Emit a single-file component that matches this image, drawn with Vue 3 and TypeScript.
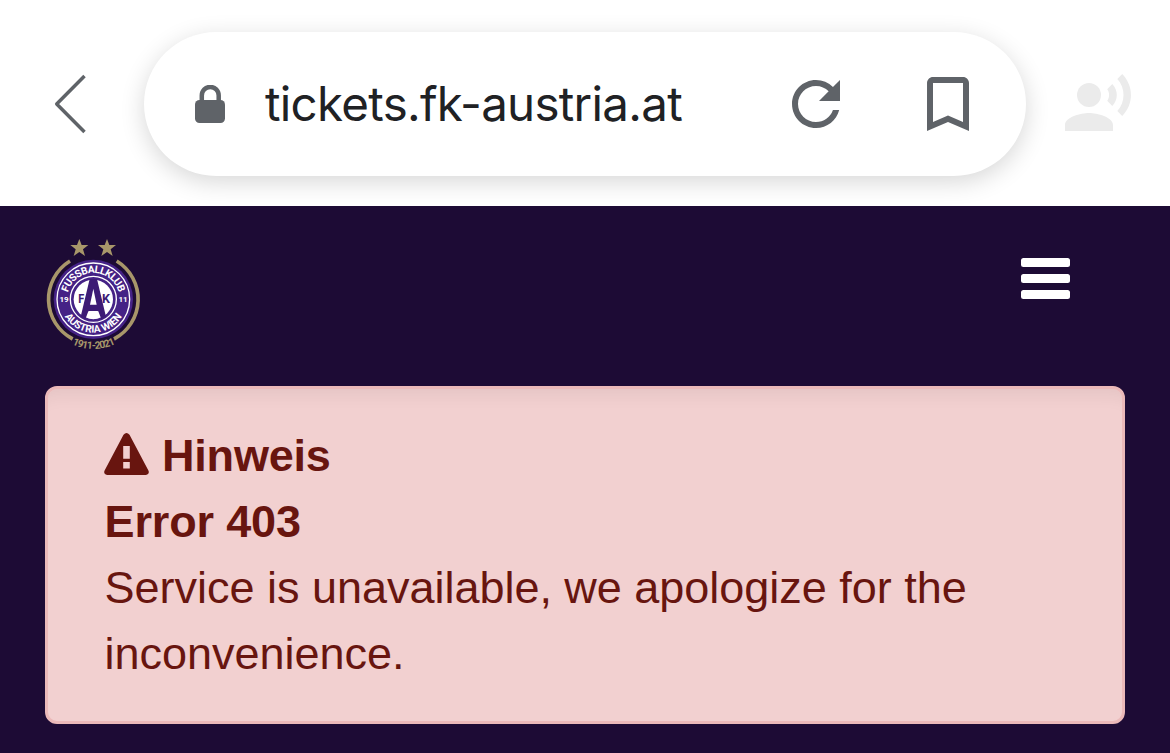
<script setup lang="ts">
const host = 'tickets.fk-austria.at'
const notice = {
  title: 'Hinweis',
  code: 'Error 403',
  message: 'Service is unavailable, we apologize for the inconvenience.',
}
</script>

<template>
  <div class="screen">
    <header class="browser">
      <svg class="back" viewBox="0 0 36 60" aria-label="Back"><path d="M32.500 2 4.700 30 32.500 58" /></svg>
      <div class="omnibox">
        <svg class="lock" viewBox="0 0 30 38">
          <path class="shackle" d="M6.800 18V10.400a8.200 8.200 0 0 1 16.900 0V18" />
          <rect y="15" width="30" height="23" rx="4.500" />
        </svg>
        <span class="host">{{ host }}</span>
        <svg class="icon reload" viewBox="0 0 24 24"><path d="M17.65 6.35A7.958 7.958 0 0 0 12 4c-4.42 0-7.99 3.58-7.99 8s3.57 8 7.99 8c3.73 0 6.84-2.55 7.73-6h-2.08A5.99 5.99 0 0 1 12 18c-3.31 0-6-2.69-6-6s2.69-6 6-6c1.66 0 3.14.69 4.22 1.78L13 11h7V4l-2.35 2.35z" /></svg>
        <svg class="icon" viewBox="0 0 24 24"><path d="M17 3H7c-1.1 0-1.99.9-1.99 2L5 21l7-3 7 3V5c0-1.1-.9-2-2-2zm0 15l-5-2.18L7 18V5h10v13z" /></svg>
      </div>
      <svg class="icon voice" viewBox="0 0 24 24"><circle cx="9" cy="9" r="4" /><path d="M9 15c-2.67 0-8 1.34-8 4v2h16v-2c0-2.66-5.33-4-8-4zm7.76-9.64l-1.68 1.69c.84 1.18.84 2.71 0 3.89l1.68 1.69c2.02-2.02 2.02-5.07 0-7.27zM20.07 2l-1.63 1.63c2.77 3.02 2.77 7.56 0 10.74L20.07 16c3.9-3.89 3.91-9.95 0-14z" /></svg>
    </header>

    <main class="page">
      <nav class="topbar">
        <svg class="crest" viewBox="0 0 390 390">
          <defs>
            <path id="arc-top" d="M111 208a79 79 0 0 1 158 0" />
            <path id="arc-bottom" d="M90 208a100 100 0 0 0 200 0" />
            <path id="arc-years" d="M41 208a149 149 0 0 0 298 0" />
          </defs>
          <g class="gold">
            <path d="M148 27l7 18h20l-16 13 6 20-17-12-17 12 6-20-16-13h20z" />
            <path d="M231 27l7 18h20l-16 13 6 20-17-12-17 12 6-20-16-13h20z" />
          </g>
          <path class="laurel" d="M120 93A134.500 134.500 0 0 0 128 327M260 93A134.500 134.500 0 0 1 252 327" />
          <circle class="disc" cx="190" cy="208" r="119" />
          <circle class="ring" cx="190" cy="208" r="109" />
          <circle class="ring" cx="190" cy="208" r="69" />
          <circle class="core" cx="190" cy="208" r="59" />
          <path class="letter" d="M179 147h22l27 113-14 8-9-24h-30l-9 24-14-8z" />
          <path class="core" d="M190 176l10 48h-20zM177 243h26l5 21q-18 7-36 0z" />
          <text class="legend" textLength="206"><textPath href="#arc-top" startOffset="50%">FUSSBALLKLUB</textPath></text>
          <text class="legend"><textPath href="#arc-bottom" startOffset="50%">AUSTRIA WIEN</textPath></text>
          <text class="year" x="102" y="217">19</text>
          <text class="year" x="279" y="217">11</text>
          <text class="initial" x="145" y="220" textLength="18" lengthAdjust="spacingAndGlyphs">F</text>
          <text class="initial" x="216" y="220" textLength="24" lengthAdjust="spacingAndGlyphs">K</text>
          <text class="span"><textPath href="#arc-years" startOffset="50%">1911-2021</textPath></text>
        </svg>
        <button class="menu" aria-label="Menu"><i /><i /><i /></button>
      </nav>

      <section class="alert" role="alert">
        <strong class="heading">
          <svg class="warning" viewBox="0 0 45 42"><path fill-rule="evenodd" d="M19.500 1.700Q22.500-1.500 25.500 1.700L44.400 37.500Q46 41 42 42H3Q-1 41 .6 37.500ZM19.200 13v12.800h6.600V13ZM19.200 29v6.500h6.600V29Z" /></svg>
          <span>{{ notice.title }}</span>
        </strong>
        <strong class="line">{{ notice.code }}</strong>
        <p class="line message">{{ notice.message }}</p>
      </section>
    </main>
  </div>
</template>

<style>
body { margin: 0; overflow: hidden; background: #1d0b35; }
</style>

<style scoped>
.screen { height: 753px; display: flex; flex-direction: column; overflow: hidden; }
.browser { box-sizing: border-box; height: 206px; display: flex; align-items: center; padding: 2px 36px 0 52px; background: #fff; }
.back { width: 36px; height: 60px; fill: none; stroke: #5f6368; stroke-width: 3.500; stroke-linejoin: round; }
.omnibox { box-sizing: border-box; width: 882px; height: 144px; margin-left: 56px; padding: 0 42px 0 51px; display: flex; align-items: center; border-radius: 72px; background: #fff; box-shadow: 0 6px 24px rgba(0, 0, 0, .16); }
.lock { width: 30px; height: 38px; fill: #5f6368; }
.shackle { fill: none; stroke: #5f6368; stroke-width: 4.500; }
.host { margin-left: 40px; font: 47.500px/60px Inter, sans-serif; letter-spacing: -.72px; color: #202124; white-space: nowrap; }
.icon { width: 72px; height: 72px; flex: none; fill: #5f6368; }
.reload { margin-left: auto; margin-right: 60px; }
.voice { margin-left: 36px; fill: #ebebeb; }
.page { flex: 1; padding: 0 45px; background: #1d0b35; }
.topbar { height: 180px; display: flex; align-items: flex-start; justify-content: space-between; }
.crest { width: 130px; height: 130px; margin: 24px 0 0 -15px; overflow: visible; font-family: Roboto, sans-serif; font-weight: 700; }
.gold, .span { fill: #a8976a; }
.laurel { fill: none; stroke: #a8976a; stroke-width: 11; }
.disc { fill: #452286; }
.letter, .initial { fill: #3c1b75; }
.ring { fill: none; stroke: #fff; stroke-width: 4; }
.core { fill: #fff; }
.legend { font-size: 31px; letter-spacing: -.5px; fill: #fff; text-anchor: middle; }
.year { font-size: 24px; fill: #fff; text-anchor: middle; }
.initial { font-size: 40px; }
.span { font-size: 31px; letter-spacing: -2.500px; text-anchor: middle; }
.menu { width: 49px; height: 41px; margin: 52px 55px 0 0; padding: 0; border: 0; background: none; display: flex; flex-direction: column; justify-content: space-between; }
.menu i { height: 8.600px; border-radius: 2.500px; background: #fff; }
.alert { box-sizing: border-box; height: 338px; padding: 34px 57px 31px 56px; border: 3px solid #ebb9b9; border-radius: 12px; background: #f2d0d0; box-shadow: inset 0 24px 18px -18px rgba(0, 0, 0, .06); font: 45px/66px "Liberation Sans", Arial, sans-serif; color: #68150f; }
.heading { display: flex; align-items: center; gap: 13px; letter-spacing: -.2px; }
.warning { width: 45px; height: 42px; margin-top: -4px; fill: currentColor; }
.line { display: block; margin: 0 0 0 .6px; letter-spacing: -.15px; }
.message { letter-spacing: -.02px; }
</style>
